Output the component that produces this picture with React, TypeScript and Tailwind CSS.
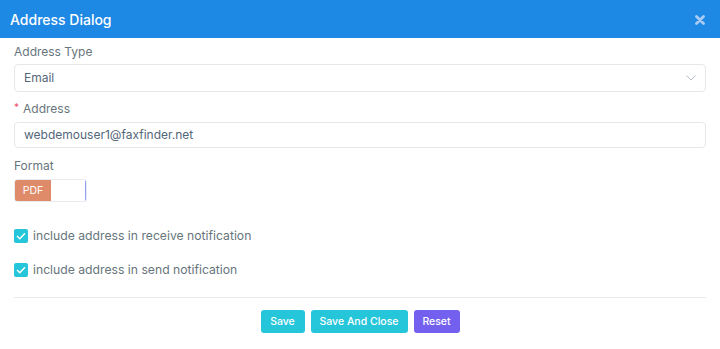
import React from "react";

function Check() {
  return (
    <div className="w-[14px] h-[14px] bg-[#26c6da] rounded-[2px] flex items-center justify-center shrink-0">
      <svg width="10" height="8" viewBox="0 0 10 8">
        <path d="M1 4 L3.8 6.8 L9 1.2" stroke="white" strokeWidth="1.4" fill="none" />
      </svg>
    </div>
  );
}

export default function App() {
  const font = { fontFamily: "Inter, 'Noto Sans', sans-serif" };
  return (
    <div className="w-[720px] h-[349px] bg-white overflow-hidden" style={font}>
      <div className="h-[38px] bg-[#1e88e5] flex items-center justify-between pl-[10px] pr-[15px]">
        <span className="text-white text-[14px] font-medium">Address Dialog</span>
        <svg width="10" height="10" viewBox="0 0 10 10" className="mt-[1px]">
          <path d="M1.5 1.5 L8.5 8.5 M8.5 1.5 L1.5 8.5" stroke="#a9cbf2" strokeWidth="2.8" strokeLinecap="round" />
        </svg>
      </div>
      <div className="px-[14px] pt-[6px]">
        <div className="text-[12px] text-[#67757c] leading-[16px] h-[16px]">Address Type</div>
        <div className="mt-[4px] h-[28px] border border-[#e5e7eb] rounded-[4px] flex items-center justify-between pl-[9px] pr-[9px]">
          <span className="text-[12px] text-[#54667a] leading-[16px]">Email</span>
          <svg width="10" height="6" viewBox="0 0 10 6">
            <path d="M0.5 0.5 L5 5 L9.5 0.5" stroke="#b6bcc4" strokeWidth="1" fill="none" />
          </svg>
        </div>
        <div className="mt-[9px] text-[12px] text-[#67757c] leading-[16px] h-[16px] flex items-start">
          <span className="text-[#f0506e] text-[10px] leading-[12px] mr-[4px]">*</span>
          <span>Address</span>
        </div>
        <div className="mt-[5px] h-[26px] border border-[#e5e7eb] rounded-[4px] flex items-center pl-[9px]">
          <span className="text-[12px] text-[#54667a] leading-[16px]">webdemouser1@faxfinder.net</span>
        </div>
        <div className="mt-[10px] text-[12px] text-[#67757c] leading-[16px] h-[16px]">Format</div>
        <div className="mt-[5px] flex h-[23px] w-[73px] border border-[#e9ecef] rounded-[3px] overflow-hidden">
          <div className="w-[36px] bg-[#df8a68] text-white text-[10.5px] leading-[14px] flex items-center justify-center">PDF</div>
          <div className="flex-1 border-r border-[#8fa0f4]"></div>
        </div>
        <div className="mt-[26px] flex items-center h-[16px]">
          <Check />
          <span className="ml-[5px] text-[12.2px] leading-[16px] text-[#67757c]">include address in receive notification</span>
        </div>
        <div className="mt-[18px] flex items-center h-[16px]">
          <Check />
          <span className="ml-[5px] text-[12.2px] leading-[16px] text-[#67757c]">include address in send notification</span>
        </div>
        <div className="mt-[19px] border-t border-[#ebebeb]"></div>
        <div className="mt-[12px] flex justify-center gap-[6px]">
          <button className="h-[23px] w-[44px] rounded-[3px] bg-[#26c6da] text-white text-[10.5px] leading-[14px] font-medium">Save</button>
          <button className="h-[23px] w-[97px] rounded-[3px] bg-[#26c6da] text-white text-[10.5px] leading-[14px] font-medium">Save And Close</button>
          <button className="h-[23px] w-[46px] rounded-[3px] bg-[#7460ee] text-white text-[10.5px] leading-[14px] font-medium">Reset</button>
        </div>
      </div>
    </div>
  );
}
